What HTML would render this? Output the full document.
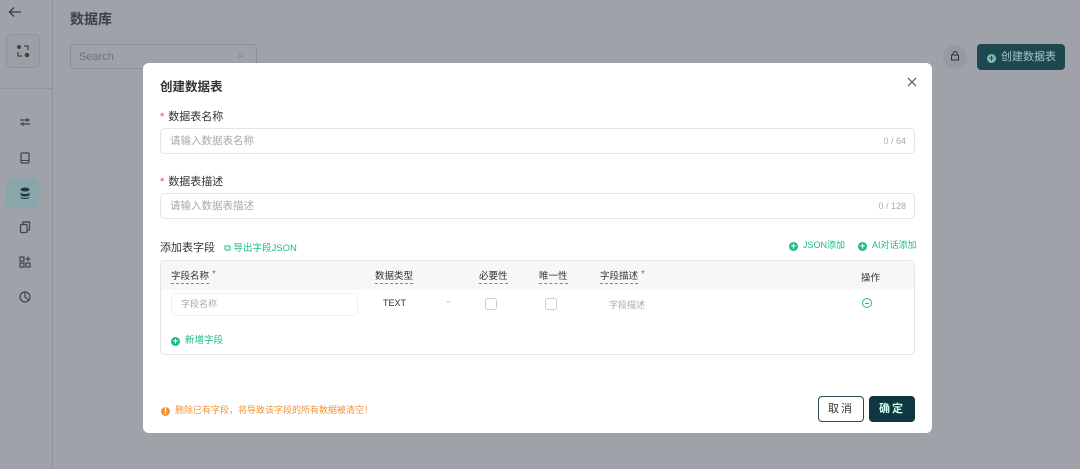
<!DOCTYPE html>
<html><head><meta charset="utf-8"><style>
*{box-sizing:border-box;margin:0;padding:0}
body{width:1080px;height:469px;overflow:hidden;background:#9fa2a9;font-family:"Liberation Sans","Noto Sans CJK SC",sans-serif;position:relative;color:#333}
.abs{position:absolute}
.side{left:0;top:0;width:53px;height:469px;border-right:1px solid #8f939b}
.ic{position:absolute;left:18px;width:14px;height:14px}
.modal{left:143px;top:63px;width:789px;height:370px;background:#fff;border-radius:6px}
.lbl{font-size:11px;color:#333}
.req{color:#e5484d;margin-right:4px}
.inp{border:1px solid #e3e5e8;border-radius:5px;height:26px;font-size:10.5px;color:#aaa;padding:0 9px;line-height:24px}
.cnt{position:absolute;right:8px;top:0;font-size:9px;color:#aaa}
.th{font-size:9.5px;color:#333;top:9px;border-bottom:1px dashed #888;line-height:13px}
.g{color:#20b88f}
.dot{display:inline-block;width:9px;height:9px;border-radius:50%;background:#22b98f;color:#fff;font-size:9px;line-height:9px;text-align:center;vertical-align:-1px;margin-right:5px;font-weight:bold}
</style></head><body>
<div class="abs side">
 <svg class="abs" style="left:8px;top:6px" width="14" height="12" viewBox="0 0 14 12"><path d="M13 6H2M6 1.5L1.5 6 6 10.5" stroke="#3a3f48" stroke-width="1.3" fill="none"/></svg>
 <div class="abs" style="left:6px;top:34px;width:34px;height:34px;border:1px solid #8e939b;border-radius:5px;background:#9b9fa6"></div>
 <svg class="abs" style="left:15px;top:43px" width="16" height="16" viewBox="0 0 16 16"><circle cx="4" cy="4" r="2" fill="#444"/><circle cx="12" cy="12" r="2.3" fill="#444"/><path d="M9 3h4v4M3 9v4h4" stroke="#444" stroke-width="1.3" fill="none"/></svg>
 <div class="abs" style="left:0;top:88px;width:53px;border-top:1px solid #8f939b"></div>
 <svg class="ic" style="top:115px" viewBox="0 0 14 14"><path d="M2 5h10M2 9h10M9 3v4M5 7v4" stroke="#3f444d" stroke-width="1.2" fill="none"/></svg>
 <svg class="ic" style="top:151px" viewBox="0 0 14 14"><rect x="3" y="2" width="8" height="10" rx="1" stroke="#3f444d" stroke-width="1.2" fill="none"/><path d="M3 9.5h8" stroke="#3f444d"/></svg>
 <div class="abs" style="left:6px;top:178px;width:33px;height:30px;border-radius:5px;background:#89a6aa"></div>
 <svg class="ic" style="top:186px" viewBox="0 0 14 14"><ellipse cx="7" cy="3.5" rx="4.5" ry="2" fill="#1d3a45"/><path d="M2.5 6c0 1.2 2 2 4.5 2s4.5-.8 4.5-2v2.5c0 1.2-2 2-4.5 2s-4.5-.8-4.5-2zM2.5 10c0 1.2 2 2 4.5 2s4.5-.8 4.5-2v1c0 1.2-2 2-4.5 2s-4.5-.8-4.5-2z" fill="#1d3a45"/></svg>
 <svg class="ic" style="top:220px" viewBox="0 0 14 14"><rect x="2.5" y="4.5" width="6.5" height="8" rx="1" stroke="#3f444d" stroke-width="1.2" fill="none"/><path d="M5 4.5V2h6.5v8H9" stroke="#3f444d" stroke-width="1.2" fill="none"/></svg>
 <svg class="ic" style="top:255px" viewBox="0 0 14 14"><rect x="2" y="2" width="4" height="4" stroke="#3f444d" stroke-width="1.2" fill="none"/><rect x="2" y="8" width="4" height="4" stroke="#3f444d" stroke-width="1.2" fill="none"/><rect x="8" y="8" width="4" height="4" stroke="#3f444d" stroke-width="1.2" fill="none"/><path d="M10 1.5v5M7.5 4h5" stroke="#3f444d" stroke-width="1.2"/></svg>
 <svg class="ic" style="top:290px" viewBox="0 0 14 14"><circle cx="7" cy="7" r="5" stroke="#3f444d" stroke-width="1.2" fill="none"/><path d="M7 2v5l3.5 3" stroke="#3f444d" stroke-width="1.2" fill="none"/></svg>
</div>
<div class="abs" style="left:70px;top:9px;font-size:14px;font-weight:bold;color:#3c414a">数据库</div>
<div class="abs" style="left:70px;top:44px;width:187px;height:25px;border:1px solid #8d9199;border-radius:4px;font-size:11px;color:#6e737b;padding:6px 8px">Search<span style="position:absolute;right:12px;top:5px;font-size:10px">⌕</span></div>
<div class="abs" style="left:943px;top:45px;width:24px;height:24px;border-radius:50%;background:#959aa2"></div>
<svg class="abs" style="left:949px;top:50px" width="12" height="12" viewBox="0 0 12 12"><rect x="2.5" y="5" width="7" height="5" stroke="#333" fill="none"/><path d="M4 5V3.5a2 2 0 0 1 4 0V5" stroke="#333" fill="none"/></svg>
<div class="abs" style="left:977px;top:44px;width:88px;height:26px;background:#1f4750;border-radius:4px;color:#9fc6c4;font-size:11px;line-height:26px;padding-left:10px"><span class="dot" style="background:#7fbcb0;color:#1f4750">+</span>创建数据表</div>

<div class="abs modal">
 <div class="abs" style="left:17px;top:13px;font-size:12.5px;font-weight:bold;color:#333">创建数据表</div>
 <svg class="abs" style="left:764px;top:14px" width="10" height="10" viewBox="0 0 10 10"><path d="M1 1l8 8M9 1L1 9" stroke="#555" stroke-width="1.2"/></svg>
 <div class="abs lbl" style="left:17px;top:45px"><span class="req">*</span>数据表名称</div>
 <div class="abs inp" style="left:17px;top:65px;width:755px">请输入数据表名称<span class="cnt">0 / 64</span></div>
 <div class="abs lbl" style="left:17px;top:110px"><span class="req">*</span>数据表描述</div>
 <div class="abs inp" style="left:17px;top:130px;width:755px">请输入数据表描述<span class="cnt">0 / 128</span></div>
 <div class="abs lbl" style="left:17px;top:176px">添加表字段 <span class="g" style="font-size:9.5px;margin-left:6px">⧉ 导出字段JSON</span></div>
 <div class="abs g" style="left:646px;top:175px;font-size:9px"><span class="dot">+</span>JSON添加</div>
 <div class="abs g" style="left:715px;top:175px;font-size:9px"><span class="dot">+</span>AI对话添加</div>
 <div class="abs" style="left:17px;top:197px;width:755px;height:95px;border:1px solid #e3e5e8;border-radius:5px;overflow:hidden">
  <div class="abs" style="left:0;top:0;width:100%;height:29px;background:#f6f7f9"></div>
  <div class="abs th" style="left:10px">字段名称</div><span class="abs req" style="left:51px;top:8px;font-size:10px">*</span>
  <div class="abs th" style="left:214px">数据类型</div>
  <div class="abs th" style="left:318px">必要性</div>
  <div class="abs th" style="left:378px">唯一性</div>
  <div class="abs th" style="left:439px">字段描述</div><span class="abs req" style="left:480px;top:8px;font-size:10px">*</span>
  <div class="abs" style="left:700px;top:9px;font-size:9.5px">操作</div>
  <div class="abs inp" style="left:10px;top:32px;width:187px;height:23px;line-height:21px;font-size:9px;border-color:#eef0f2">字段名称</div>
  <div class="abs" style="left:222px;top:37px;font-size:9px;color:#333">TEXT</div>
  <div class="abs" style="left:284px;top:35px;font-size:8px;color:#bbb">⌄</div>
  <div class="abs" style="left:324px;top:37px;width:12px;height:12px;border:1px solid #ccc;border-radius:3px"></div>
  <div class="abs" style="left:384px;top:37px;width:12px;height:12px;border:1px solid #ccc;border-radius:3px"></div>
  <div class="abs" style="left:448px;top:37px;font-size:9px;color:#aaa">字段描述</div>
  <div class="abs" style="left:701px;top:37px;width:10px;height:10px;border:1.2px solid #22b98f;border-radius:50%"><div style="position:absolute;left:2px;top:3.5px;width:4px;border-top:1.2px solid #22b98f"></div></div>
  <div class="abs g" style="left:10px;top:71px;font-size:9.5px"><span class="dot">+</span>新增字段</div>
 </div>
 <div class="abs" style="left:18px;top:340px;font-size:9px;color:#f0953a"><span class="dot" style="background:#f0953a">!</span>删除已有字段，将导致该字段的所有数据被清空！</div>
 <div class="abs" style="left:675px;top:333px;width:46px;height:26px;border:1px solid #2b4a52;border-radius:4px;font-size:11px;text-align:center;line-height:24px;color:#333;letter-spacing:2px">取消</div>
 <div class="abs" style="left:726px;top:333px;width:46px;height:26px;background:#0e3742;border-radius:4px;font-size:11px;text-align:center;line-height:26px;color:#cfe;font-weight:bold;letter-spacing:2px">确定</div>
</div>
</body></html>
